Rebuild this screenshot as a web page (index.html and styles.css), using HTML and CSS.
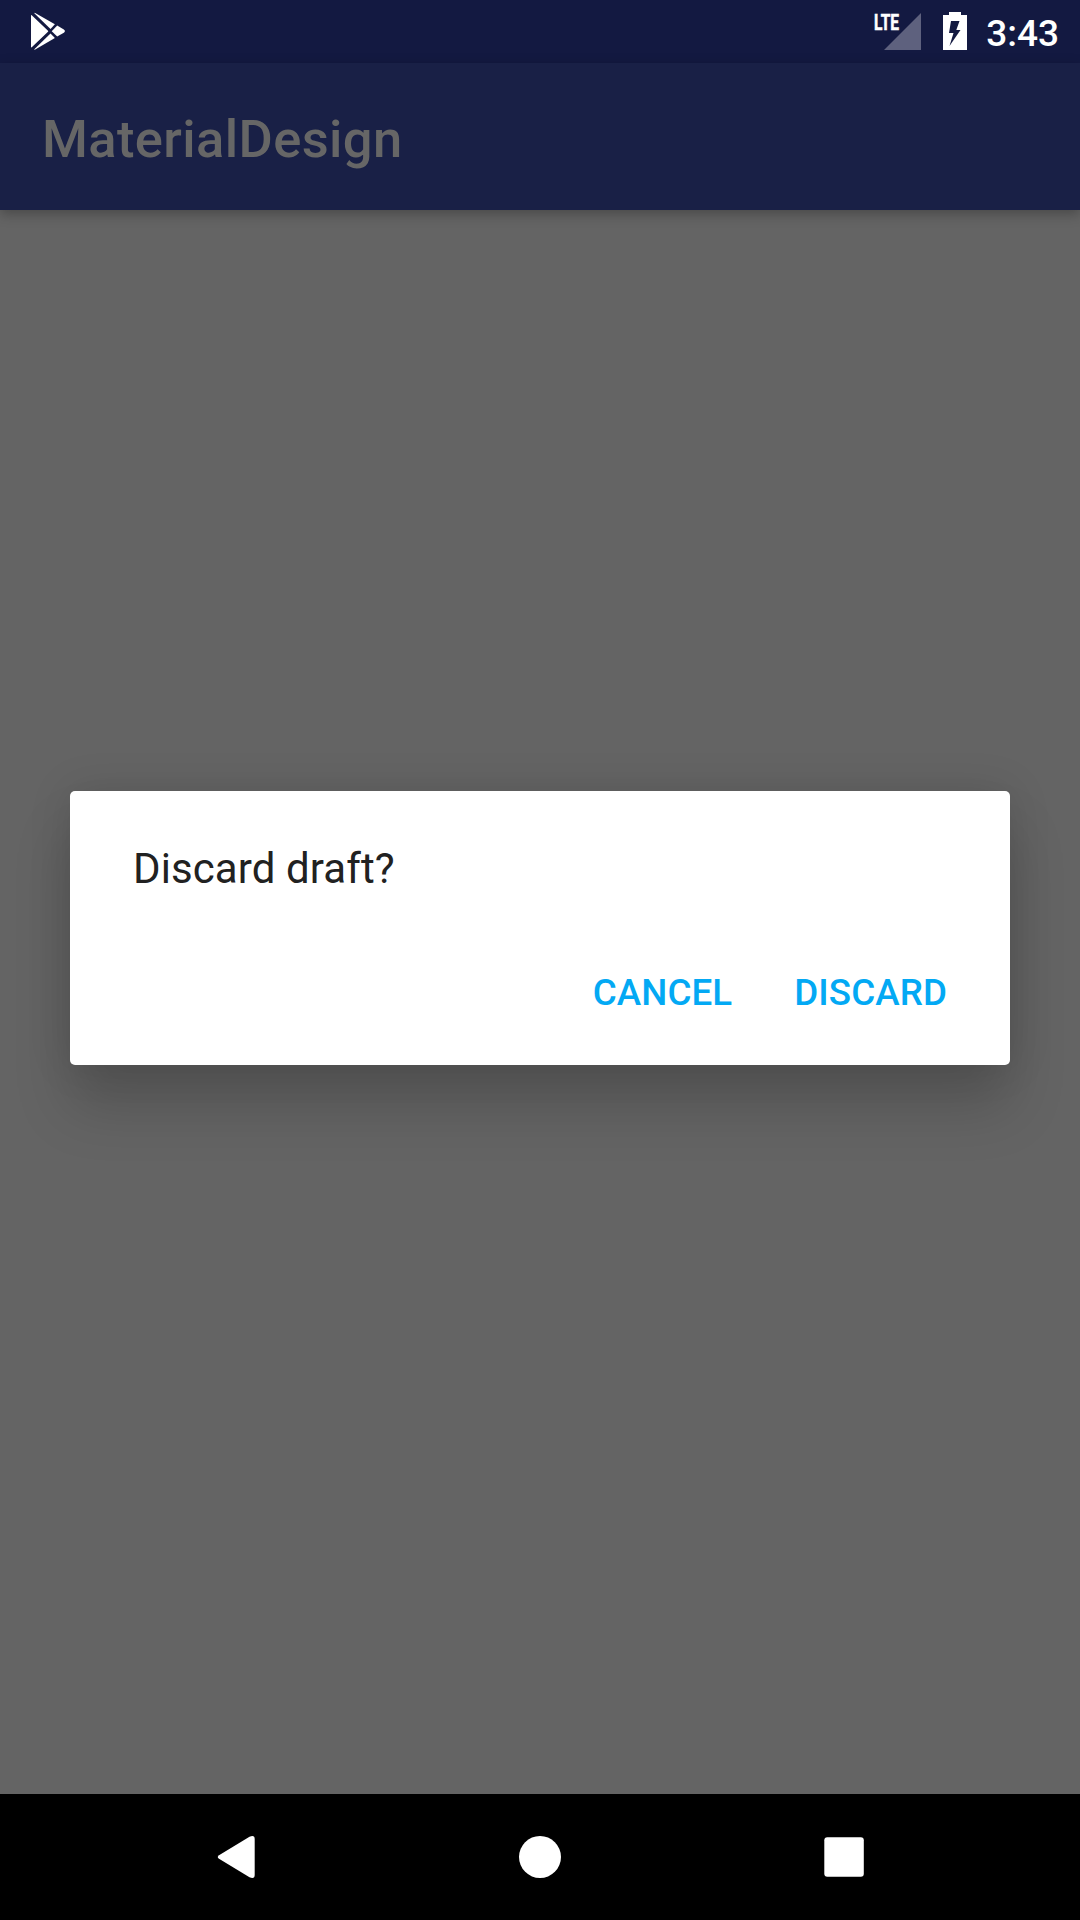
FILE: index.html
```html
<!DOCTYPE html>
<html lang="en">
<head>
<meta charset="utf-8">
<title>MaterialDesign</title>
<link rel="stylesheet" href="styles.css">
</head>
<body>
<div class="screen">
  <header class="status-bar">
    <svg class="play-icon" width="36" height="40" viewBox="0 0 36 40" aria-hidden="true">
      <path d="M1 3.200Q1.300 2.800 2 3.500L18 18.800Q18.500 19.200 18 19.700L2 35Q1.300 35.700 1 35.200Z"/>
      <path d="M4.300 1.200Q4.300.400 5.200.900L24.900 12.300L20.500 16.900Z"/>
      <path d="M4.300 37.200Q4.200 38 5.200 37.500L24.900 26L20.500 21.500Z"/>
      <path d="M27.200 13.600L33.800 17.500Q36 19.100 33.800 20.700L27.200 24.600L21.700 19.200Z"/>
    </svg>
    <div class="status-icons">
      <svg class="signal-icon" width="48" height="40" viewBox="0 0 48 40">
        <path class="signal-level" d="M47 3V40H10Z"/>
        <text class="network-type" x="0" y="20" textLength="25" lengthAdjust="spacingAndGlyphs">LTE</text>
      </svg>
      <svg class="battery-icon" width="24" height="38" viewBox="0 0 24 38" aria-hidden="true">
        <path fill-rule="evenodd" d="M6 0H18V3H24V38H0V3H6ZM8 9L6 21H10.500L6.500 34L17.500 18H13.300L16.500 9Z"/>
      </svg>
      <span class="clock">3:43</span>
    </div>
  </header>
  <div class="app-bar"><h1 class="app-title">MaterialDesign</h1></div>
  <main class="content">
    <section class="dialog" role="alertdialog">
      <p class="dialog-message">Discard draft?</p>
      <div class="dialog-actions">
        <button class="action">CANCEL</button>
        <button class="action">DISCARD</button>
      </div>
    </section>
  </main>
  <nav class="nav-bar">
    <svg class="nav-icon" viewBox="0 0 48 48" aria-hidden="true"><path d="M7 22.200L37.500 3.700Q42.700 1.500 42.700 6V42Q42.700 46.500 37.500 44.300L7 25.800Q4.500 24 7 22.200Z"/></svg>
    <svg class="nav-icon" viewBox="0 0 48 48" aria-hidden="true"><circle cx="24" cy="24" r="21"/></svg>
    <svg class="nav-icon" viewBox="0 0 48 48" aria-hidden="true"><rect x="4.300" y="4.300" width="39.500" height="39.500" rx="3"/></svg>
  </nav>
</div>
</body>
</html>
```
FILE: styles.css
```css
* { box-sizing: border-box; }
body { margin: 0; font-family: Roboto, "Liberation Sans", sans-serif; }
svg { display: block; fill: #fff; }
.screen {
  width: 1080px;
  height: 1920px;
  display: flex;
  flex-direction: column;
  overflow: hidden;
  background: #646464;
}
.status-bar {
  height: 63px;
  flex: none;
  display: flex;
  justify-content: space-between;
  align-items: flex-start;
  padding: 0 21px 0 30px;
  background: #131941;
}
.play-icon { margin-top: 12px; }
.status-icons { display: flex; align-items: flex-start; }
.signal-icon { margin: 10px 21px 0 0; }
.signal-level { fill: #5e617e; }
.network-type { font-size: 22.500px; font-weight: 700; stroke: #fff; stroke-width: .6px; }
.battery-icon { margin: 12px 19px 0 0; }
.clock {
  font-size: 37px;
  font-weight: 500;
  line-height: 43px;
  color: #fff;
  margin-top: 12px;
}
.app-bar {
  height: 147px;
  flex: none;
  display: flex;
  align-items: center;
  padding: 5px 42px 0;
  background: #192046;
  box-shadow: 0 4px 12px rgba(0, 0, 0, .28);
}
.app-title {
  margin: 0;
  font-size: 52.500px;
  font-weight: 500;
  line-height: 62px;
  letter-spacing: .380px;
  color: #666;
}
.content { flex: 1; padding: 581px 70px 0; }
.dialog {
  height: 274px;
  padding: 47px 63px 0;
  border-radius: 5px;
  background: #fff;
  box-shadow: 0 42px 56px rgba(0, 0, 0, .17), 0 0 44px rgba(0, 0, 0, .12);
}
.dialog-message {
  margin: 0;
  font-size: 42px;
  line-height: 62px;
  letter-spacing: .1px;
  color: #212121;
}
.dialog-actions {
  display: flex;
  justify-content: flex-end;
  gap: 62px;
  margin-top: 68px;
}
.action {
  border: 0;
  padding: 0;
  background: none;
  font: 500 36.750px/50px Roboto, "Liberation Sans", sans-serif;
  letter-spacing: .08px;
  color: #03a9f4;
}
.nav-bar {
  height: 126px;
  flex: none;
  display: flex;
  justify-content: center;
  align-items: center;
  gap: 256px;
  background: #000;
}
.nav-icon { width: 48px; height: 48px; }
```
